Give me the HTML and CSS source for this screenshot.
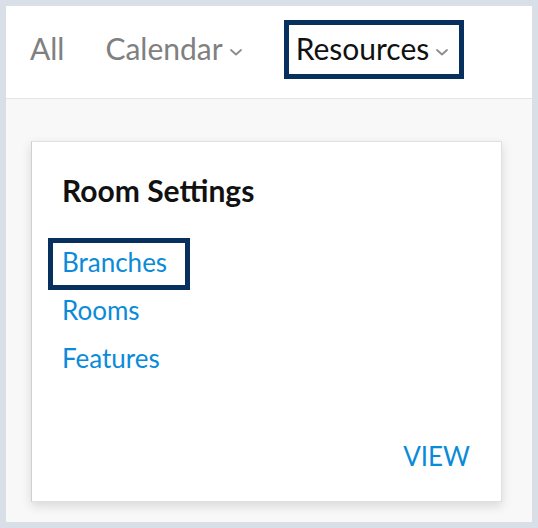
FILE: index.html
```html
<!DOCTYPE html>
<html lang="en">
<head>
<meta charset="utf-8">
<title>Resources</title>
<link rel="stylesheet" href="styles.css">
</head>
<body>
<div class="frame">
  <nav class="tabs">
    <a class="tab">All</a>
    <a class="tab">Calendar<svg class="chev" viewBox="0 0 12 7" width="12" height="7"><path d="M1 1l5 4.5L11 1" fill="none" stroke="currentColor" stroke-width="1.8" stroke-linecap="round" stroke-linejoin="round"/></svg></a>
    <a class="tab tab-active focus-ring">Resources<svg class="chev" viewBox="0 0 12 7" width="12" height="7"><path d="M1 1l5 4.5L11 1" fill="none" stroke="currentColor" stroke-width="1.8" stroke-linecap="round" stroke-linejoin="round"/></svg></a>
  </nav>
  <main class="content">
    <section class="card">
      <h2 class="card-title">Room Settings</h2>
      <ul class="links">
        <li><a class="link link-focus">Branches</a></li>
        <li><a class="link">Rooms</a></li>
        <li><a class="link">Features</a></li>
      </ul>
      <div class="card-footer"><a class="view">VIEW</a></div>
    </section>
  </main>
</div>
</body>
</html>
```
FILE: styles.css
```css
* { box-sizing: border-box; }
html, body { margin: 0; padding: 0; }
body {
  background: #d8dfe6;
  font-family: Lato, "Open Sans", sans-serif;
  padding: 6px;
  height: 528px;
}
.frame {
  background: #f8f8f8;
  height: 516px;
  display: flex;
  flex-direction: column;
}
.tabs {
  height: 93px;
  flex: none;
  background: #fff;
  border-bottom: 1px solid #e4e4e4;
  display: flex;
  align-items: flex-start;
  padding: 24px 0 0 24px;
}
.tab {
  font-size: 30px;
  line-height: 36px;
  color: #808080;
  display: flex;
  align-items: center;
  position: relative;
}
.tab + .tab { margin-left: 41px; }
.tab-active { color: #111; margin-left: 54px !important; }
.chev {
  color: #8c8c8c;
  margin-left: 7px;
  margin-top: 9px;
}
.focus-ring::after {
  content: "";
  position: absolute;
  left: -12px;
  right: -16px;
  top: -10px;
  bottom: -13px;
  border: 5px solid #07305f;
}
.content {
  flex: 1;
  padding: 42px 30px 20px 25px;
}
.card {
  width: 471px;
  height: 361px;
  background: #fff;
  border: 1px solid #e0e0e0;
  border-left-color: #d0d0d0;
  box-shadow: 0 4px 10px rgba(0,0,0,0.13);
  padding: 30px 31px 29px 30px;
  display: flex;
  flex-direction: column;
}
.card-title {
  margin: 0;
  font-size: 30px;
  font-weight: 700;
  color: #111;
  line-height: 36px;
}
.links {
  list-style: none;
  margin: 30px 0 0;
  padding: 0;
}
.link {
  display: inline-block;
  font-size: 26px;
  line-height: 48px;
  color: #0a8bd9;
  position: relative;
}
.link-focus::after {
  content: "";
  position: absolute;
  left: -14px;
  right: -23px;
  top: 0;
  bottom: -4px;
  border: 5px solid #07305f;
}
.card-footer {
  margin-top: auto;
  display: flex;
  justify-content: flex-end;
}
.view {
  font-size: 26px;
  color: #0a8bd9;
  line-height: 31px;
}
```
